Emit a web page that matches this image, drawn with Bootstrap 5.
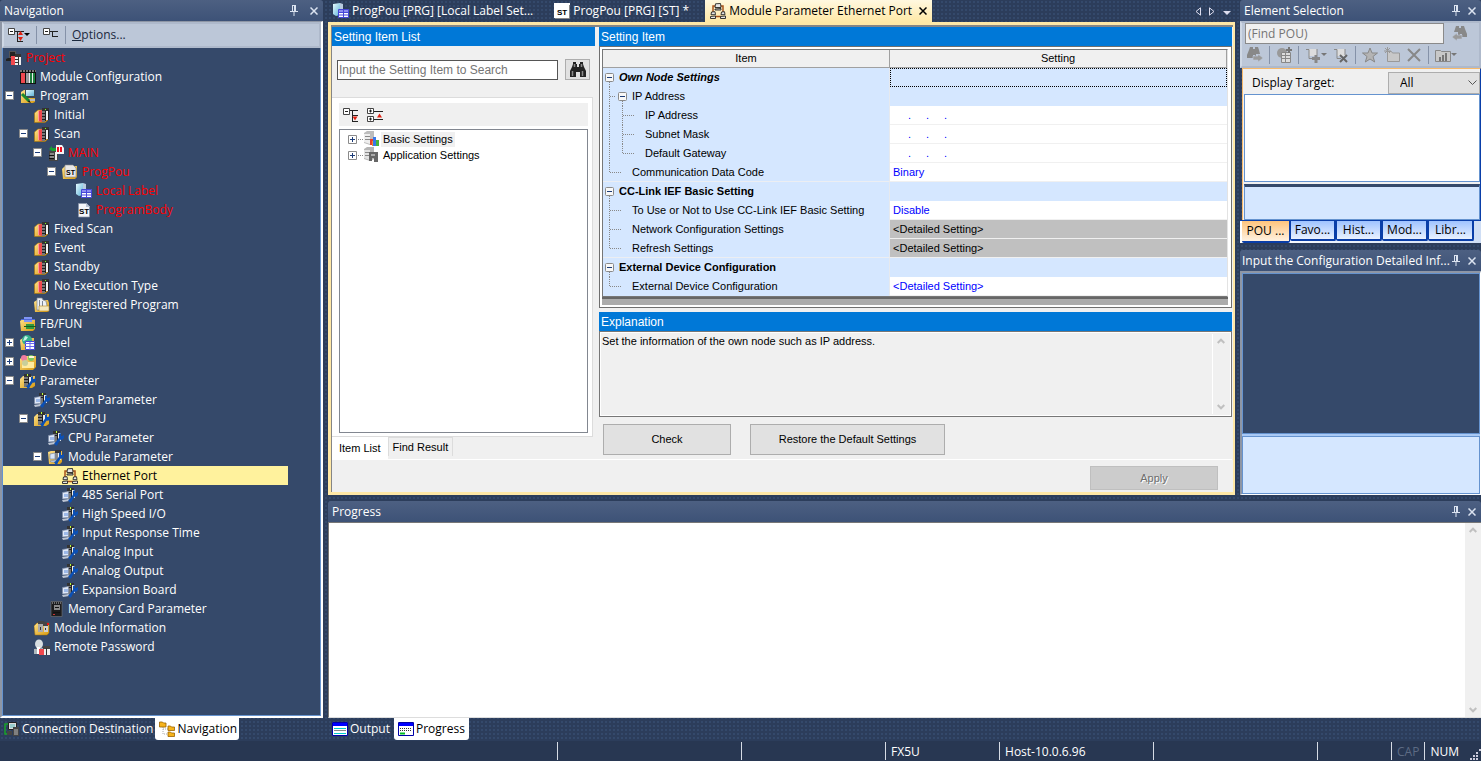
<!DOCTYPE html>
<html lang="en">
<head>
<meta charset="utf-8">
<meta name="viewport" content="width=device-width, initial-scale=1">
<title>Module Parameter Ethernet Port</title>
<link href="https://cdn.jsdelivr.net/npm/bootstrap@5.3.0/dist/css/bootstrap.min.css" rel="stylesheet">
<style>
:root{--ui:"Open Sans","Noto Sans",sans-serif;--form:"Liberation Sans",Arial,sans-serif;--navy:#35496a;--edge:#6593cf;--pale:#d5e7ff;--blue:#0078d7}
body{font-family:var(--ui);font-size:12px;line-height:16px;color:#000;background-color:#2c3d5b;background-image:radial-gradient(#34496b 1px,transparent 1px);background-size:4px 4px;min-height:100vh}
h2{font-size:12px;line-height:16px;font-weight:400;margin:0}
button{font:inherit;color:inherit;background:none;border:0;padding:0}
a{color:inherit;text-decoration:none}
svg{display:block;flex:none}
.i16{width:16px;height:16px}
.dim{color:#888}
.form-face{font-family:var(--form);font-size:11px;line-height:15px}
.side-left{width:324px;padding-right:1px}
.side-right{width:241px}
.titlebar{height:21px;padding:0 5px 0 4px;color:#fff;background:linear-gradient(#4d6082,#3d5277);border-radius:3px 3px 0 0}
.titlebar button{color:#dbe3f0}
.titlebar.second{margin-top:7px;padding-left:2px}
.tools-strip{background:#bcc7d8;border:2px solid #aeb9cb;border-left-color:#cfd8e5}
.nav-tools{height:26px;color:#1b293e;gap:6px;padding:0 4px}
.vsep{width:1px;height:18px;background:#8592a8}
.well{border:2px solid #8e96a5;border-top-width:1px;border-right-color:#fff;border-bottom-color:#fff}

/* project tree */
.tree-nav{background:var(--navy);border:1px solid var(--edge);border-top:0;color:#fff}
.node{height:19px;position:relative}
.node>a{display:flex;align-items:center;gap:4px;height:19px;white-space:nowrap}
.lv0{padding-left:3px}.lv1{padding-left:17px}.lv2{padding-left:31px}.lv3{padding-left:45px}.lv4{padding-left:59px}.lv5{padding-left:73px}
.twig{width:9px;height:9px}
.node>.twig{position:absolute;top:5px}
.lv1>.twig{left:2px}.lv2>.twig{left:16px}.lv3>.twig{left:30px}.lv4>.twig{left:44px}
.changed{color:#f00}
.picked{background:#fff29d;color:#000;margin-right:32px}

/* dock tabs */
.foot{height:23px;color:#fff}
.foot-tab{display:flex;align-items:center;gap:2px;height:22px;padding:0 4px;border-radius:0 0 3px 3px}
.foot-tab.on{background:#fff;color:#000}
.foot-left .foot-tab{padding-right:2px}

/* document tabs and frame */
.doc-tabs{height:22px;color:#fff}
.doc-tab{display:flex;align-items:center;gap:3px;height:22px;padding:0 5px;white-space:nowrap}
.doc-tab.mid{margin:0 11px}
.doc-tab.on{background:linear-gradient(#fff8e0,#ffe8a6);color:#000}
.upper{padding-bottom:6px}
.doc-area{margin-right:5px}
.doc-frame{border:3px solid #ffe8a6;border-right-width:2px;background:#f0f0f0}
.doc-in{border:1px solid #858585;border-width:2px 0 0 1px;padding-right:1px}
.band{background:var(--blue);color:#fff;height:19px;padding:2px;font-size:12px}

/* setting item list */
.list-col{width:263px}
.find-row{height:47px;margin-bottom:4px;padding-left:5px;gap:7px}
.find-box{width:221px;border:1px solid #555;height:20px;border-radius:0;padding:0 1px;font-size:12px;background:#fff}
.find-btn{width:25px;height:21px;background:#e1e1e1;border:1px solid #adadad}
.list-page{background:#fff;border:1px solid #dcdcdc;border-left:0;padding:5px 4px 3px 7px;width:261px;height:340px}
.mini-tools{height:23px;margin-bottom:3px}
.list-tree{border:1px solid #828790;padding:1px 8px}
.mini-row{height:16px}
.mini-row a{margin-left:2px;padding:0 2px}
.focus-bg{background:#f0f0f0}
.page-tab{height:19px;padding:1px 4px;border:1px solid #dcdcdc;border-bottom:0}
.page-tab.on{height:22px;background:#fff;padding:4px 7px;border:0}

/* setting sheet */
.set-col{margin-left:4px}
.sheet{border:1px solid #6f6f6f;background:#fff;padding:2px 3px 2px 2px}
.grid-t{width:100%;table-layout:fixed;border-collapse:separate;border-spacing:0;border:1px solid #777;border-right-color:#e3e3e3}
.c-item{width:46%}
.grid-t th,.grid-t td{height:19px;padding:0;white-space:nowrap}
.grid-t thead th{height:18px;background:#f0f0f0;font-weight:400;text-align:center;border-right:1px solid #a0a0a0;border-bottom:1px solid #a0a0a0}
.grid-t tbody th{background:var(--pale);font-weight:400;border-right:1px solid #e6e9ee}
.grid-t tbody td{background:#fff;color:#00f;padding-left:3px;border-bottom:1px solid #f0f0f0}
.grid-t tbody th.sec{font-weight:700}
.grid-t tbody th .d-flex{height:19px}
.grid-t tbody th .d-flex span{padding-left:3px}
.grid-t tbody tr.grp td{background:var(--pale);border-bottom-color:var(--pale)}
.grid-t tbody tr.end th{border-bottom:1px solid #eceef2}
.grid-t tbody tr.end th .d-flex{height:18px;overflow:hidden}
.grid-t tbody tr.off td{background:silver;color:#000}
.grid-t tbody tr.grp td.cur{border:1px dotted #000}
.rest{height:8px;background:#ababab;border-top:2px solid #666}
.quad i{display:inline-block;width:18px;text-align:right;font-style:normal}
.note-box{height:86px;border:1px solid #777;background:#f0f0f0;outline:1px solid #fff;outline-offset:-2px;padding:2px}
.vbar{width:17px;border-left:1px solid #fff;color:#c0c0c0;background:#f0f0f0}
.push{background:#e1e1e1;border:1px solid #adadad;height:31px;border-radius:0}
.push:disabled{background:#ccc;border-color:#bfbfbf;color:#6d6d6d;height:24px;text-shadow:1px 1px #fff}
.w-check{width:128px}.w-restore{width:195px}
.act-row{gap:19px;padding:7px 0 4px 4px}
.apply-row{border-top:1px solid #fff;padding:6px 14px 0 0}

/* element selection */
.pou-tools{height:47px;padding:0 3px}
.pou-find{height:21px;border:1px solid #8a8a8a;border-radius:0;background:#f0f0f0;padding:0 2px;width:199px;font-size:12px}
.dim-row{gap:6px;padding:2px 0 0 2px}
.pou-body{border:1px solid #f7b96b;border-right-color:#0a3ea8;background:#f0f0f0;border-bottom:0;margin-left:2px;padding-top:3px}
.pou-body label{padding-left:9px}
.pick-wrap{position:relative}
.pick{width:92px;height:22px;border:1px solid #adadad;background:#e1e1e1;padding:0 3px 0 11px;appearance:none;font:inherit}
.pick-wrap svg{position:absolute;right:3px;top:8px;pointer-events:none}
.pane-white{height:88px;background:#fff;border:1px solid var(--edge);margin:0 0 2px 1px}
.pane-pale{height:36px;background:var(--pale);border:1px solid var(--edge);border-top:3px solid var(--navy);margin-left:1px}
.pou-tabs{background:linear-gradient(90deg,#fff,#cfdef5);border-top:1px solid #0a3ea8;padding-left:2px}
.pou-tab{height:20px;width:46px;background:linear-gradient(#9fc3ff,#eaf2ff);border:1px solid #0a3ea8;border-width:0 2px 2px 1px;border-radius:0 0 2px 2px}
.pou-tab.on{width:48px;height:22px;background:linear-gradient(#ffc47c,#fff2e2);border-left:0;border-right-width:1px}
.cfg{border:1px solid #fff;border-left:2px solid #8e96a5;border-top:2px solid #8e96a5;background:#a9c9f5}
.cfg-top{background:var(--navy);border:1px solid var(--edge);margin-bottom:2px}
.cfg-low{background:var(--pale);border:1px solid var(--edge);height:58px}

.log{height:196px;background:#fff;border-top:1px solid #777;border-left:1px solid #777;border-bottom:1px solid #ddd}
.status{height:20px;background:#283752;color:#fff}
.status span{border-left:1px solid #d6dbe4;height:18px;padding:2px 5px 0}
.s-184{width:184px}.s-144{width:144px}.s-114{width:114px}.s-154{width:154px}.s-164{width:164px}.s-74{width:74px}
.status .s-cap{color:#5d6b84}
.status .s-num{padding-right:8px}
</style>
</head>
<body class="d-flex flex-column">
<svg width="0" height="0" class="position-absolute" aria-hidden="true"><defs>
<linearGradient id="gold" x2="1" y2="1"><stop stop-color="#ffe28a"/><stop offset="1" stop-color="#d79a10"/></linearGradient>
<linearGradient id="scr" x2="1" y2="1"><stop stop-color="#e8fbff"/><stop offset="1" stop-color="#5fb4d8"/></linearGradient>
<symbol id="plus" viewBox="0 0 9 9"><path fill="#fff" stroke="#8a8a8a" d="M.5.5h8v8h-8z"/><path stroke="#1c3c78" d="M2 4.500h5M4.500 2v5"/></symbol>
<symbol id="minus" viewBox="0 0 9 9"><path fill="#fff" stroke="#8a8a8a" d="M.5.5h8v8h-8z"/><path stroke="#1c3c78" d="M2 4.500h5"/></symbol>
<symbol id="pin" viewBox="0 0 8 11"><path fill="none" stroke="currentColor" d="M2.500 0v6M2 .5h4M5.500 0v6M4.500 0v6M0 6.500h8M4 7v4"/></symbol>
<symbol id="ex" viewBox="0 0 8 8"><path stroke="currentColor" stroke-width="1.500" d="M.5.5l7 7M7.500.5l-7 7"/></symbol>
<g id="plc"><path fill="#f0484e" d="M4 4l4-1v12l-4-1z"/><path fill="#ff9a9a" d="M4 4h1v10H4z"/><path fill="#333" d="M8 1h7v3H8z"/><path fill="#777" d="M8 4h3v11H8z"/><path fill="#f4f4f4" d="M12 4h2v9h-2z"/><path stroke="#222" d="M8 6.500h3M8 9.500h3M8 12.500h3M11.500 4v10M14.500 3v10"/><path fill="#7f2" d="M11 2h1v1h-1z"/></g>
<symbol id="folderplc" viewBox="0 0 16 16"><path fill="url(#gold)" stroke="#a87408" stroke-width=".6" d="M.5 6L4 3h10v10l-3 2.500H.5z"/><use href="#plc"/></symbol>
<symbol id="project" viewBox="0 0 16 16"><path fill="#555" d="M3 1h7l1 7H3z"/><path fill="#222" d="M4 2h5v5H4zM0 9l2-1h6v3H0z"/><path fill="#f0484e" d="M5 6h4v9H5z"/><path fill="#333" d="M9 4h6v3H9z"/><path fill="#eee" d="M9 7h6v8H9z"/><path stroke="#333" d="M12.500 7v8M9 9.500h3M9 12.500h3"/></symbol>
<symbol id="modconf" viewBox="0 0 16 16"><path fill="#111" d="M0 1h16v14H0z"/><path stroke="#ddd" stroke-dasharray="2 1" d="M0 2h16"/><path fill="#f0484e" d="M1 4h4v10H1z"/><path fill="#999" d="M6 4h3v10H6z"/><path fill="#1e7f3c" d="M10 4h2v10h-2zM13 4h2v10h-2z"/><path stroke="#eee" d="M9.500 4v10M12.500 4v10"/></symbol>
<symbol id="program" viewBox="0 0 16 16"><path fill="url(#gold)" d="M1 4l3-2h3v8h8v4l-2 1H1z"/><path fill="#3d4a55" d="M5 1h10v9H5z"/><path fill="url(#scr)" d="M6 2h8v6H6z"/><path fill="#bbb" d="M9 11h6v2H9z"/><path stroke="#1c8a2e" stroke-width="3" d="M2 6l7 7"/><path fill="#111" d="M9 12l2 3-3-1z"/></symbol>
<symbol id="main" viewBox="0 0 16 16"><path fill="#444" d="M1 6h9v10H1z"/><path fill="#888" d="M2 8h4v6H2z"/><path fill="#eee" d="M7 7h2v8H7z"/><path stroke="#111" d="M1 10.500h5M1 13.500h5"/><path fill="#18a030" d="M1 4l3-3v2h4v3H4z"/><path fill="#f5f5f5" d="M8 0h6l2 3v6H8z"/><path fill="#e12" d="M9 2h2v5H9zM12 2h2v5h-2z"/></symbol>
<symbol id="st" viewBox="0 0 16 16"><path fill="#f4f6fa" stroke="#8794a8" stroke-width=".7" d="M2.500 1.500h8l3 3v10.500h-11z"/><path fill="#b9c4d6" d="M10 1l4 4h-4z"/><text x="3" y="12" font-family="Liberation Sans" font-size="8" font-weight="700">ST</text></symbol>
<symbol id="stbox" viewBox="0 0 16 16"><path fill="#fff" d="M0 0h16v15H0z"/><path stroke="#888" fill="none" d="M15.500 2v13.500H1"/><text x="3" y="12" font-family="Liberation Sans" font-size="8" font-weight="700">ST</text></symbol>
<symbol id="folderst" viewBox="0 0 16 16"><path fill="url(#gold)" d="M0 5l3-3h12v11l-2 2H1z"/><path fill="#e8e8e8" stroke="#888" stroke-width=".6" d="M3 1h8l3 3v9H3z"/><text x="4" y="11" font-family="Liberation Sans" font-size="7" font-weight="700">ST</text></symbol>
<symbol id="local" viewBox="0 0 16 16"><path fill="url(#scr)" d="M0 1l7-1v12l-4 1-3-2z"/><path fill="#b8cbe0" d="M7 0l3 1v5H7z"/><path fill="#fff" stroke="#4646d8" d="M5.500 6.500h10v8h-10z"/><path fill="#8c8cf0" d="M6 7h9v2H6z"/><path stroke="#4646d8" d="M5 9.500h10M5 12h10M10.500 7v8"/></symbol>
<symbol id="papers" viewBox="0 0 16 16"><path fill="url(#gold)" d="M0 5l3-2h11l1 3v8l-2 1H1z"/><path fill="#eef1f5" stroke="#7e8794" stroke-width=".7" d="M3 1h5l1 2 3 1 1 5v4H3z"/><path fill="none" stroke="#7e8794" d="M5.500 3v7M8.500 4v6"/><path fill="#f6e9bd" stroke="#b88a20" stroke-width=".6" d="M5 9h10v5H5z"/></symbol>
<symbol id="fbfun" viewBox="0 0 16 16"><path fill="url(#gold)" d="M0 5l3-2h12v10l-2 2H1z"/><path fill="#7f95f5" d="M4 1h8v5H4z"/><path stroke="#5068d8" d="M1 3.500h14"/><path fill="#2f9a3c" d="M6 8h8v5H6z"/><path stroke="#185f20" d="M4 10.500h12"/></symbol>
<symbol id="label" viewBox="0 0 16 16"><path fill="url(#gold)" d="M0 5l3-2h11v10l-2 2H1z"/><circle cx="7" cy="5" r="5" fill="#35b08c"/><path fill="#c4f1e6" d="M5 1l3 1-2 3-3 1z"/><path fill="#fff" stroke="#4646d8" d="M5.500 6.500h9v8h-9z"/><path stroke="#6a6af0" d="M5 8.500h9M5 11.500h9M10 7v8"/></symbol>
<symbol id="device" viewBox="0 0 16 16"><path fill="url(#gold)" d="M0 5l3-3h13v11l-3 3H0z"/><circle cx="4" cy="4" r="3" fill="#ef7ca0"/><circle cx="11" cy="4" r="3" fill="#79c860"/><path fill="#ffeca0" d="M2 8h12v6H2z"/><circle cx="5" cy="9" r="3" fill="#c8cf9a"/><path fill="#fff7d6" d="M9 2h5v2H9z"/></symbol>
<g id="wrench"><path stroke="#0c50b4" stroke-width="2.500" d="M8 14l5-7"/><path fill="#0c50b4" d="M11 8V4l2-1v3h1l2-1v3l-2 2zM6 13l3-1 1 2-2 2z"/></g>
<symbol id="folderparam" viewBox="0 0 16 16"><path fill="url(#gold)" d="M0 6l3-3h12v10l-3 2H0z"/><path fill="#333" d="M4 1h7v3H4z"/><path fill="#777" d="M4 4h4v10H4z"/><path fill="#eee" d="M8 4h3v8H8z"/><path stroke="#222" d="M4 6.500h4M4 9.500h4M8.500 4v9"/><path fill="#bf3" d="M7 1h1v2H7z"/><use href="#wrench"/></symbol>
<symbol id="param" viewBox="0 0 16 16"><path fill="#333" d="M5 1h7v3H5z"/><path fill="#777" d="M5 4h4v10H5z"/><path fill="#eee" d="M9 3h4v8H9z"/><path stroke="#222" d="M6 5.500h3M9.500 3v9"/><path fill="#bf3" d="M8 1h1v2H8z"/><path fill="#dfe8f8" stroke="#7b8aa5" stroke-width=".7" d="M.5 5.500l6-1v7l-6 .5z"/><path fill="#9db9e8" d="M2 7h4v3H2z"/><path fill="#bcc4d2" d="M0 13l7-1v2l-6 1z"/><use href="#wrench"/></symbol>
<symbol id="modparam" viewBox="0 0 16 16"><path fill="url(#gold)" d="M0 3l3-1h11v11l-2 2H1z"/><path fill="#333" d="M7 1h6v3H7z"/><path fill="#888" d="M7 4h3v9H7z"/><path fill="#eee" d="M10 4h3v7h-3z"/><path fill="#d8e6f8" stroke="#7b8aa5" stroke-width=".7" d="M2 5l5-1v6H2zM2 12l6-1v2H3z"/><use href="#wrench"/></symbol>
<symbol id="eth" viewBox="0 0 16 16"><path fill="none" stroke="#a8521c" stroke-width="1.500" d="M5 3H3v8M11 3h2v8M5 13.500h6"/><g fill="#e6e6e6" stroke="#222" stroke-width=".9"><path d="M5.500.8l5-.3.500 4h-6zM5 6l6-.5v1.500H5z"/><path d="M1.500 9l3.500-.3.500 3H1zM.5 13.500l5-.5v2.500h-5zM11.500 9l3-.3.500 3h-4zM10.500 13.500l5-.5v2.500h-5z"/></g></symbol>
<symbol id="mem" viewBox="0 0 16 16"><path fill="#1b1b1d" stroke="#777" stroke-width=".6" d="M3 .5h11v15H3z"/><path stroke="#bbb" stroke-dasharray="1 1" d="M4 2h9"/><path fill="#888" d="M6 4h6v5H6z"/><path stroke="#111" d="M7 6.500h4M5 11.500h7"/><path fill="#c33" d="M5 13h2v1H5z"/></symbol>
<symbol id="modinfo" viewBox="0 0 16 16"><path fill="url(#gold)" stroke="#a87408" stroke-width=".5" d="M0 6l3-3h12v10l-2 2H1z"/><path fill="#444" d="M4 1h5l5 2v3H4z"/><path fill="#aaa" d="M4 4h5v8H4z"/><path fill="#d0d0d0" d="M10 6h4v6h-4z"/><path fill="#333" d="M6 7h1v3H6zM11 8h1v2h-1z"/><path fill="#e11" d="M13 3h2v2h-2z"/></symbol>
<symbol id="remote" viewBox="0 0 16 16"><ellipse cx="5" cy="5" rx="4" ry="4.500" fill="#d9dfe2"/><path fill="#aeb8bd" d="M0 10l9-1v6H0z"/><path fill="#fff" d="M3 8h3v7H3z"/><path fill="#f0484e" d="M5 10h5v6H5z"/><path fill="#444" d="M9 7h7v3H9z"/><path fill="#eee" d="M10 10h6v6h-6z"/><path stroke="#333" d="M12.500 9v7"/></symbol>
<symbol id="conn" viewBox="0 0 16 16"><path fill="none" stroke="#17a32a" stroke-width="1.500" d="M5 3H1v10h7"/><path fill="#ddd" stroke="#222" d="M4.500 1.500h8v7h-8z"/><path fill="#9cc" d="M6 3h5v4H6z"/><path fill="#444" d="M9 6h6v9H9zM3 10h5v4H3z"/><path stroke="#bbb" d="M10 9h4M10 11h4M10 13h4"/></symbol>
<symbol id="navi" viewBox="0 0 16 16"><path fill="none" stroke="#aaa" stroke-dasharray="1 1" d="M4 6v7h6M4 8h6"/><g fill="#f6b31c" stroke="#9a6300" stroke-width=".8"><path d="M.5 1h3l1 1h2.500v4H.5zM9 5h2.500l1 1h3v3.500H9zM9 11h2.500l1 1h3v3.500H9z"/></g></symbol>
<symbol id="outp" viewBox="0 0 16 14"><path fill="#fff" stroke="#0000a8" d="M.5.5h15v13H.5z"/><path fill="#00f" d="M1 1h14v3H1z"/><path stroke="#0cc" d="M2 6.500h12M2 11.500h12"/><path stroke="#888" d="M2 8.500h12"/></symbol>
<symbol id="prog" viewBox="0 0 16 14"><path fill="#fff" stroke="#0000a8" d="M.5.5h15v13H.5z"/><path fill="#00f" d="M1 1h14v3H1z"/><path stroke="#333" stroke-dasharray="1 1" d="M2 6.500h12M2 8.500h12"/><path stroke="#0b2" stroke-width="2" d="M2 11.500h5"/></symbol>
<symbol id="bino" viewBox="0 0 18 18"><path fill="#222" d="M4 1h3v2h1v3h2V3h1V1h3v2l1 3 2 4v6h-6v-5H7v5H1v-6l2-4 1-3z"/><path stroke="#8a8a8a" stroke-width="1.500" d="M5.500 3v3M12.500 3v3M3.500 10v5M13.500 10v5"/></symbol>
<symbol id="colred" viewBox="0 0 16 16"><path fill="#fff" stroke="#444" d="M.5 1.500h6v6h-6z"/><path stroke="#222" d="M2 4.500h3M7 3.500h8M9.500 4v11M9 8.500h6M9 14.500h6"/><path fill="#e02010" d="M9.500 9.500h5l-2.500 4z"/></symbol>
<symbol id="expred" viewBox="0 0 16 16"><path fill="#fff" stroke="#444" d="M.5 1.500h6v5h-6zM.5 9.500h6v5h-6z"/><path stroke="#222" d="M2 4h3M2 12h3M3.500 2.500v3M3.500 10.500v3M7 4.500h9M7 12.500h9"/><path fill="#e02010" d="M10 10.500h5l-2.500-4z"/></symbol>
<symbol id="basic" viewBox="0 0 16 16"><path fill="#bdbdbd" d="M1 2l3-2h7v12l-4 2-6-2z"/><path fill="#eee" d="M1 3h6v10l-6-2z"/><path stroke="#888" d="M2 5.500h5M2 8.500h5"/><path fill="#e8402c" d="M7 8h3v6H7z"/><path fill="#f08c30" d="M9 10h2v5H9z"/><path fill="#3a78e8" d="M10 6h3v9h-3z"/><path fill="#4bb43c" d="M13 9h3v6h-3z"/></symbol>
<symbol id="appl" viewBox="0 0 16 16"><path fill="#b5b5b5" d="M1 2l3-2h7v12l-4 2-6-2z"/><path fill="#e2e2e2" d="M1 3h6v10l-6-2z"/><path stroke="#888" d="M2 5.500h5M2 8.500h5"/><path fill="#666" d="M6 5h9v10h-4v-4H9v3H6z"/><path fill="#aaa" d="M8 7h4v2H8z"/></symbol>
<symbol id="gv" viewBox="0 0 13 19"><path stroke="#888" stroke-dasharray="1 1" d="M6.500 0v19"/></symbol>
<symbol id="gt" viewBox="0 0 13 19"><path stroke="#888" stroke-dasharray="1 1" d="M6.500 0v19M7 9.500h6"/></symbol>
<symbol id="gl" viewBox="0 0 13 19"><path stroke="#888" stroke-dasharray="1 1" d="M6.500 0v9M7 9.500h6"/></symbol>
<symbol id="gh" viewBox="0 0 13 19"><path stroke="#888" stroke-dasharray="1 1" d="M0 9.500h6"/></symbol>
<symbol id="gb" viewBox="0 0 13 19"><path stroke="#888" stroke-dasharray="1 1" d="M6.500 14v5"/><rect x="2.500" y="5.500" width="8" height="8" rx="1" fill="#f8f8f8" stroke="#8a8a8a"/><path stroke="#1c3c78" d="M4 9.500h5"/></symbol>
<symbol id="up" viewBox="0 0 8 6"><path fill="none" stroke="currentColor" stroke-width="2" d="M.7 5L4 1.700 7.300 5"/></symbol>
<symbol id="down" viewBox="0 0 8 6"><path fill="none" stroke="currentColor" stroke-width="2" d="M.7 1L4 4.300 7.300 1"/></symbol>
</defs></svg>

<main class="d-flex flex-grow-1">
  <!-- Navigation -->
  <section class="side-left d-flex flex-column flex-shrink-0">
    <header class="titlebar d-flex align-items-center">
      <h2 class="flex-grow-1">Navigation</h2>
      <button class="me-2" aria-label="Pin"><svg width="8" height="11"><use href="#pin"/></svg></button>
      <button class="ms-1" aria-label="Close"><svg width="8" height="8"><use href="#ex"/></svg></button>
    </header>
    <div class="well flex-grow-1 d-flex flex-column">
      <div class="tools-strip nav-tools d-flex align-items-center">
        <button class="d-flex align-items-center" aria-label="Collapse all"><svg class="i16" viewBox="0 0 16 16"><path fill="#fff" stroke="#444" d="M.5 1.500h6v6h-6z"/><path stroke="#222" d="M2 4.500h3M7 4.500h9M9.500 5v10M9 14.500h6"/><path fill="#e02010" d="M10 8h5l-2.500-4zM10 10h5l-2.500 4z"/></svg><svg width="6" height="4" viewBox="0 0 6 4"><path d="M0 0h6L3 3z"/></svg></button>
        <span class="vsep"></span>
        <button aria-label="Collapse"><svg class="i16" viewBox="0 0 16 16"><path fill="#fff" stroke="#444" d="M.5 1.500h6v6h-6z"/><path stroke="#222" d="M2 4.500h3M7 4.500h8M9.500 5v5M9 9.500h6"/></svg></button>
        <span class="vsep"></span>
        <button><u>O</u>ptions...</button>
      </div>
      <ul class="tree-nav list-unstyled mb-0 flex-grow-1">
        <li class="node lv0 changed"><a href="#"><svg class="i16"><use href="#project"/></svg>Project</a></li>
        <li class="node lv1"><a href="#"><svg class="i16"><use href="#modconf"/></svg>Module Configuration</a></li>
        <li class="node lv1"><button class="twig" aria-label="Collapse"><svg class="twig"><use href="#minus"/></svg></button><a href="#"><svg class="i16"><use href="#program"/></svg>Program</a></li>
        <li class="node lv2"><a href="#"><svg class="i16"><use href="#folderplc"/></svg>Initial</a></li>
        <li class="node lv2"><button class="twig" aria-label="Collapse"><svg class="twig"><use href="#minus"/></svg></button><a href="#"><svg class="i16"><use href="#folderplc"/></svg>Scan</a></li>
        <li class="node lv3 changed"><button class="twig" aria-label="Collapse"><svg class="twig"><use href="#minus"/></svg></button><a href="#"><svg class="i16"><use href="#main"/></svg>MAIN</a></li>
        <li class="node lv4 changed"><button class="twig" aria-label="Collapse"><svg class="twig"><use href="#minus"/></svg></button><a href="#"><svg class="i16"><use href="#folderst"/></svg>ProgPou</a></li>
        <li class="node lv5 changed"><a href="#"><svg class="i16"><use href="#local"/></svg>Local Label</a></li>
        <li class="node lv5 changed"><a href="#"><svg class="i16"><use href="#st"/></svg>ProgramBody</a></li>
        <li class="node lv2"><a href="#"><svg class="i16"><use href="#folderplc"/></svg>Fixed Scan</a></li>
        <li class="node lv2"><a href="#"><svg class="i16"><use href="#folderplc"/></svg>Event</a></li>
        <li class="node lv2"><a href="#"><svg class="i16"><use href="#folderplc"/></svg>Standby</a></li>
        <li class="node lv2"><a href="#"><svg class="i16"><use href="#folderplc"/></svg>No Execution Type</a></li>
        <li class="node lv2"><a href="#"><svg class="i16"><use href="#papers"/></svg>Unregistered Program</a></li>
        <li class="node lv1"><a href="#"><svg class="i16"><use href="#fbfun"/></svg>FB/FUN</a></li>
        <li class="node lv1"><button class="twig" aria-label="Expand"><svg class="twig"><use href="#plus"/></svg></button><a href="#"><svg class="i16"><use href="#label"/></svg>Label</a></li>
        <li class="node lv1"><button class="twig" aria-label="Expand"><svg class="twig"><use href="#plus"/></svg></button><a href="#"><svg class="i16"><use href="#device"/></svg>Device</a></li>
        <li class="node lv1"><button class="twig" aria-label="Collapse"><svg class="twig"><use href="#minus"/></svg></button><a href="#"><svg class="i16"><use href="#folderparam"/></svg>Parameter</a></li>
        <li class="node lv2"><a href="#"><svg class="i16"><use href="#param"/></svg>System Parameter</a></li>
        <li class="node lv2"><button class="twig" aria-label="Collapse"><svg class="twig"><use href="#minus"/></svg></button><a href="#"><svg class="i16"><use href="#folderparam"/></svg>FX5UCPU</a></li>
        <li class="node lv3"><a href="#"><svg class="i16"><use href="#param"/></svg>CPU Parameter</a></li>
        <li class="node lv3"><button class="twig" aria-label="Collapse"><svg class="twig"><use href="#minus"/></svg></button><a href="#"><svg class="i16"><use href="#modparam"/></svg>Module Parameter</a></li>
        <li class="node lv4 picked"><a href="#"><svg class="i16"><use href="#eth"/></svg>Ethernet Port</a></li>
        <li class="node lv4"><a href="#"><svg class="i16"><use href="#param"/></svg>485 Serial Port</a></li>
        <li class="node lv4"><a href="#"><svg class="i16"><use href="#param"/></svg>High Speed I/O</a></li>
        <li class="node lv4"><a href="#"><svg class="i16"><use href="#param"/></svg>Input Response Time</a></li>
        <li class="node lv4"><a href="#"><svg class="i16"><use href="#param"/></svg>Analog Input</a></li>
        <li class="node lv4"><a href="#"><svg class="i16"><use href="#param"/></svg>Analog Output</a></li>
        <li class="node lv4"><a href="#"><svg class="i16"><use href="#param"/></svg>Expansion Board</a></li>
        <li class="node lv3"><a href="#"><svg class="i16"><use href="#mem"/></svg>Memory Card Parameter</a></li>
        <li class="node lv2"><a href="#"><svg class="i16"><use href="#modinfo"/></svg>Module Information</a></li>
        <li class="node lv2"><a href="#"><svg class="i16"><use href="#remote"/></svg>Remote Password</a></li>
      </ul>
    </div>
    <div class="foot foot-left d-flex">
      <button class="foot-tab"><svg class="i16"><use href="#conn"/></svg>Connection Destination</button>
      <button class="foot-tab on"><svg class="i16"><use href="#navi"/></svg>Navigation</button>
    </div>
  </section>

  <div class="flex-grow-1 d-flex flex-column ps-1">
    <div class="upper d-flex flex-grow-1">
      <!-- Document area -->
      <section class="doc-area flex-grow-1 d-flex flex-column">
        <div class="doc-tabs d-flex align-items-center">
          <button class="doc-tab"><svg class="i16"><use href="#local"/></svg>ProgPou [PRG] [Local Label Set...</button>
          <button class="doc-tab mid"><svg class="i16"><use href="#stbox"/></svg>ProgPou [PRG] [ST] *</button>
          <button class="doc-tab on"><svg class="i16"><use href="#eth"/></svg>Module Parameter Ethernet Port <svg class="ms-1" width="8" height="8"><use href="#ex"/></svg></button>
          <div class="d-flex align-items-center gap-2 pe-1 ms-auto">
            <button aria-label="Previous"><svg width="6" height="9" viewBox="0 0 6 9"><path fill="none" stroke="#dde" d="M5.500.8v7.400L1 4.500z"/></svg></button>
            <button aria-label="Next"><svg width="6" height="9" viewBox="0 0 6 9"><path fill="none" stroke="#dde" d="M.5.8v7.400L5 4.500z"/></svg></button>
            <button aria-label="List" class="pt-1"><svg width="8" height="4" viewBox="0 0 8 4"><path fill="#dde" d="M0 0h8L4 4z"/></svg></button>
          </div>
        </div>
        <div class="doc-frame flex-grow-1 d-flex">
          <div class="doc-in form-face flex-grow-1 d-flex flex-column">
            <div class="d-flex">
              <div class="list-col flex-shrink-0">
                <h2 class="band">Setting Item List</h2>
                <div class="d-flex align-items-center find-row">
                  <input class="find-box" type="text" placeholder="Input the Setting Item to Search" aria-label="Input the Setting Item to Search">
                  <button class="find-btn d-flex align-items-center justify-content-center" aria-label="Search"><svg width="18" height="18"><use href="#bino"/></svg></button>
                </div>
                <div class="list-page d-flex flex-column">
                  <div class="focus-bg d-flex gap-2 px-1 py-1 mini-tools">
                    <button aria-label="Collapse all"><svg class="i16"><use href="#colred"/></svg></button>
                    <button aria-label="Expand all"><svg class="i16"><use href="#expred"/></svg></button>
                  </div>
                  <div class="list-tree flex-grow-1">
                    <div class="d-flex align-items-center mini-row"><svg class="twig"><use href="#plus"/></svg><svg width="6" height="16" viewBox="0 0 6 16"><path stroke="#888" stroke-dasharray="1 1" d="M1 8.500h5"/></svg><svg class="i16"><use href="#basic"/></svg><a href="#" class="focus-bg">Basic Settings</a></div>
                    <div class="d-flex align-items-center mini-row"><svg class="twig"><use href="#plus"/></svg><svg width="6" height="16" viewBox="0 0 6 16"><path stroke="#888" stroke-dasharray="1 1" d="M1 8.500h5"/></svg><svg class="i16"><use href="#appl"/></svg><a href="#">Application Settings</a></div>
                  </div>
                </div>
                <div class="d-flex">
                  <button class="page-tab on">Item List</button>
                  <button class="page-tab">Find Result</button>
                </div>
              </div>
              <div class="set-col flex-grow-1">
                <h2 class="band">Setting Item</h2>
                <div class="sheet">
                  <table class="grid-t">
                    <colgroup><col class="c-item"><col></colgroup>
                    <thead><tr><th scope="col">Item</th><th scope="col">Setting</th></tr></thead>
                    <tbody>
                      <tr class="grp"><th scope="row" class="sec fst-italic"><div class="d-flex align-items-center"><svg width="13" height="19"><use href="#gb"/></svg><span>Own Node Settings</span></div></th><td class="cur"></td></tr>
                      <tr class="grp"><th scope="row"><div class="d-flex align-items-center"><svg width="13" height="19"><use href="#gt"/></svg><svg width="13" height="19"><use href="#gb"/></svg><span>IP Address</span></div></th><td></td></tr>
                      <tr><th scope="row"><div class="d-flex align-items-center"><svg width="13" height="19"><use href="#gv"/></svg><svg width="13" height="19"><use href="#gt"/></svg><svg width="13" height="19"><use href="#gh"/></svg><span>IP Address</span></div></th><td class="quad"><i>.</i><i>.</i><i>.</i></td></tr>
                      <tr><th scope="row"><div class="d-flex align-items-center"><svg width="13" height="19"><use href="#gv"/></svg><svg width="13" height="19"><use href="#gt"/></svg><svg width="13" height="19"><use href="#gh"/></svg><span>Subnet Mask</span></div></th><td class="quad"><i>.</i><i>.</i><i>.</i></td></tr>
                      <tr><th scope="row"><div class="d-flex align-items-center"><svg width="13" height="19"><use href="#gv"/></svg><svg width="13" height="19"><use href="#gl"/></svg><svg width="13" height="19"><use href="#gh"/></svg><span>Default Gateway</span></div></th><td class="quad"><i>.</i><i>.</i><i>.</i></td></tr>
                      <tr class="end"><th scope="row"><div class="d-flex align-items-center"><svg width="13" height="19"><use href="#gl"/></svg><svg width="13" height="19"><use href="#gh"/></svg><span>Communication Data Code</span></div></th><td>Binary</td></tr>
                      <tr class="grp"><th scope="row" class="sec"><div class="d-flex align-items-center"><svg width="13" height="19"><use href="#gb"/></svg><span>CC-Link IEF Basic Setting</span></div></th><td></td></tr>
                      <tr><th scope="row"><div class="d-flex align-items-center"><svg width="13" height="19"><use href="#gt"/></svg><svg width="13" height="19"><use href="#gh"/></svg><span>To Use or Not to Use CC-Link IEF Basic Setting</span></div></th><td>Disable</td></tr>
                      <tr class="off"><th scope="row"><div class="d-flex align-items-center"><svg width="13" height="19"><use href="#gt"/></svg><svg width="13" height="19"><use href="#gh"/></svg><span>Network Configuration Settings</span></div></th><td>&lt;Detailed Setting&gt;</td></tr>
                      <tr class="off end"><th scope="row"><div class="d-flex align-items-center"><svg width="13" height="19"><use href="#gl"/></svg><svg width="13" height="19"><use href="#gh"/></svg><span>Refresh Settings</span></div></th><td>&lt;Detailed Setting&gt;</td></tr>
                      <tr class="grp"><th scope="row" class="sec"><div class="d-flex align-items-center"><svg width="13" height="19"><use href="#gb"/></svg><span>External Device Configuration</span></div></th><td></td></tr>
                      <tr><th scope="row"><div class="d-flex align-items-center"><svg width="13" height="19"><use href="#gl"/></svg><svg width="13" height="19"><use href="#gh"/></svg><span>External Device Configuration</span></div></th><td>&lt;Detailed Setting&gt;</td></tr>
                    </tbody>
                  </table>
                  <div class="rest"></div>
                </div>
                <h2 class="band mt-1">Explanation</h2>
                <div class="note-box d-flex">
                  <div class="flex-grow-1">Set the information of the own node such as IP address.</div>
                  <div class="vbar d-flex flex-column justify-content-between align-items-center py-1"><svg width="8" height="6"><use href="#up"/></svg><svg width="8" height="6"><use href="#down"/></svg></div>
                </div>
                <div class="d-flex act-row">
                  <button class="push w-check">Check</button>
                  <button class="push w-restore">Restore the Default Settings</button>
                </div>
              </div>
            </div>
            <div class="apply-row d-flex justify-content-end flex-grow-1">
              <button class="push w-check" disabled>Apply</button>
            </div>
          </div>
        </div>
      </section>

      <!-- Right dock -->
      <aside class="side-right flex-shrink-0 d-flex flex-column">
        <header class="titlebar d-flex align-items-center">
          <h2 class="flex-grow-1">Element Selection</h2>
          <button class="me-2" aria-label="Pin"><svg width="8" height="11"><use href="#pin"/></svg></button>
          <button aria-label="Close"><svg width="8" height="8"><use href="#ex"/></svg></button>
        </header>
        <div class="tools-strip pou-tools">
          <div class="d-flex align-items-center gap-2">
            <input class="pou-find" type="text" placeholder="(Find POU)" aria-label="Find POU">
            <button class="dim" aria-label="Find previous"><svg class="i16" viewBox="0 0 16 16"><path fill="currentColor" d="M4 0h3v2h2V0h3l1 3 2 5v3H10V8H8v2H6V6H2z"/><path fill="#9a9a9a" stroke="#bcc7d8" stroke-width=".6" d="M0 11l5-4v2h5v4H5v2z"/></svg></button>
          </div>
          <div class="dim d-flex align-items-center dim-row">
            <button aria-label="Find next"><svg class="i16" viewBox="0 0 16 16"><path fill="currentColor" d="M3 0h3v2h2V0h3l1 3 1 4H9v3H8V8H6v3H0V8l2-5z"/><path fill="#9a9a9a" stroke="#bcc7d8" stroke-width=".6" d="M16 11l-5-4v2H6v4h5v2z"/></svg></button>
            <span class="vsep"></span>
            <button aria-label="Library"><svg class="i16" viewBox="0 0 16 16"><circle cx="6" cy="6" r="5" fill="#999"/><path fill="#ddd" stroke="#888" d="M5.500 5.500h9v10h-9z"/><path stroke="#888" d="M6 8.500h9M6 11.500h9M9.500 6v9"/><path stroke="#777" stroke-width="2" d="M10 3h6M13 0v6"/></svg></button>
            <span class="vsep"></span>
            <button class="d-flex align-items-center" aria-label="Add"><svg class="i16" viewBox="0 0 16 16"><path fill="#ddd" d="M4 2h8v7H4z"/><path fill="none" stroke="#888" d="M1 2.500h3v9h4M12 2v6"/><path stroke="#888" stroke-width="3" d="M7 11.500h8M11 8v8"/></svg><svg width="6" height="4" viewBox="0 0 6 4"><path fill="#777" d="M0 0h6L3 3z"/></svg></button>
            <button aria-label="Remove"><svg class="i16" viewBox="0 0 16 16"><path fill="#ddd" d="M4 2h8v7H4z"/><path fill="none" stroke="#888" d="M1 2.500h3v9h4M12 2v6"/><path stroke="#666" stroke-width="2" d="M7 8l7 7M14 8l-7 7"/></svg></button>
            <span class="vsep"></span>
            <button aria-label="Favorite"><svg class="i16" viewBox="0 0 16 16"><path fill="#b4b4b4" stroke="#888" d="M8 1l2 5h5.500l-4.500 3.500 1.700 5.500L8 12l-4.700 3L5 9.500.5 6H6z"/></svg></button>
            <button aria-label="New folder"><svg class="i16" viewBox="0 0 16 16"><path fill="#c8c8c8" stroke="#999" d="M3.500 4.500h4l1 1.500h7v8.500h-12z"/><path stroke="#999" d="M0 4h7M3.500 0v7M1 1l5 5M6 1L1 6"/></svg></button>
            <button aria-label="Delete"><svg class="i16" viewBox="0 0 16 16"><path stroke="#888" stroke-width="2" d="M2 2l12 12M14 2L2 14"/></svg></button>
            <span class="vsep"></span>
            <button class="d-flex align-items-center" aria-label="View"><svg class="i16" viewBox="0 0 16 16"><path fill="#c8c8c8" stroke="#888" d="M.5 3.500h5l1 1h9v10H.5z"/><path stroke="#777" stroke-width="2" d="M5 10v4M8 8v6M11 6v8"/></svg><svg width="6" height="4" viewBox="0 0 6 4"><path fill="#777" d="M0 0h6L3 3z"/></svg></button>
          </div>
        </div>
        <div class="pou-body d-flex flex-column">
          <div class="d-flex align-items-center justify-content-between">
            <label for="target">Display Target:</label>
            <span class="pick-wrap d-flex"><select id="target" class="pick"><option>All</option></select><svg width="9" height="6" viewBox="0 0 9 6"><path fill="none" stroke="#555" d="M.5.5l4 4 4-4"/></svg></span>
          </div>
          <div class="pane-white"></div>
          <div class="pane-pale"></div>
        </div>
        <div class="pou-tabs d-flex">
          <button class="pou-tab on">POU ...</button><button class="pou-tab">Favo...</button><button class="pou-tab">Hist...</button><button class="pou-tab">Mod...</button><button class="pou-tab">Libr...</button>
        </div>
        <header class="titlebar second d-flex align-items-center">
          <h2 class="flex-grow-1 text-nowrap">Input the Configuration Detailed Inf...</h2>
          <button class="me-2" aria-label="Pin"><svg width="8" height="11"><use href="#pin"/></svg></button>
          <button aria-label="Close"><svg width="8" height="8"><use href="#ex"/></svg></button>
        </header>
        <div class="cfg flex-grow-1 d-flex flex-column">
          <div class="cfg-top flex-grow-1"></div>
          <div class="cfg-low"></div>
        </div>
      </aside>
    </div>

    <!-- Progress -->
    <section class="d-flex flex-column">
      <header class="titlebar d-flex align-items-center">
        <h2 class="flex-grow-1">Progress</h2>
        <button class="me-2" aria-label="Pin"><svg width="8" height="11"><use href="#pin"/></svg></button>
        <button aria-label="Close"><svg width="8" height="8"><use href="#ex"/></svg></button>
      </header>
      <div class="log d-flex justify-content-end">
        <div class="vbar d-flex flex-column justify-content-between align-items-center py-1"><svg width="8" height="6"><use href="#up"/></svg><svg width="8" height="6"><use href="#down"/></svg></div>
      </div>
      <div class="foot d-flex">
        <button class="foot-tab"><svg width="16" height="14"><use href="#outp"/></svg>Output</button>
        <button class="foot-tab on"><svg width="16" height="14"><use href="#prog"/></svg>Progress</button>
      </div>
    </section>
  </div>
</main>

<footer class="status d-flex justify-content-end align-items-center">
  <span class="s-184"></span><span class="s-144"></span><span class="s-114">FX5U</span><span class="s-154">Host-10.0.6.96</span><span class="s-164"></span><span class="s-74"></span><span class="s-cap">CAP</span><span class="s-num">NUM</span>
  <svg width="14" height="14" viewBox="0 0 14 14" class="align-self-end"><path stroke="#ccd" stroke-width="2" stroke-dasharray="2 1" d="M3 12h9M6 9h6M9 6h3M12 3h2"/></svg>
</footer>
<script src="https://cdn.jsdelivr.net/npm/bootstrap@5.3.0/dist/js/bootstrap.bundle.min.js"></script>
</body>
</html>
